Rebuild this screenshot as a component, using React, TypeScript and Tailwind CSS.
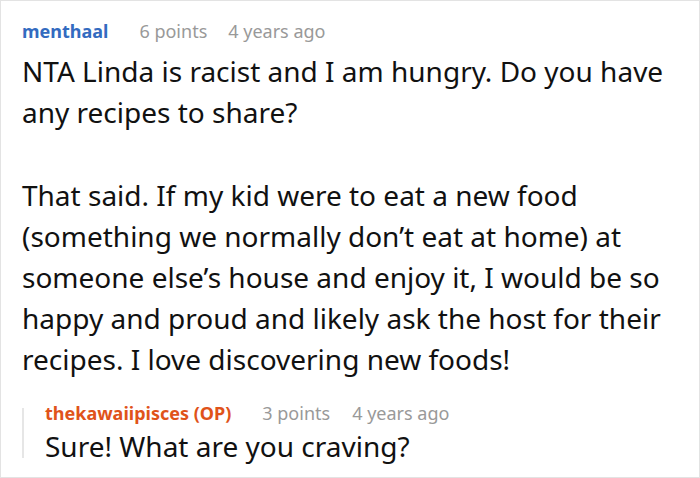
export default function App() {
  return (
    <div className="w-[700px] h-[478px] bg-white border border-[#e3e3e3] overflow-hidden" style={{ fontFamily: '"Noto Sans", "Open Sans", sans-serif' }}>
      <div className="pl-[21px] pr-3 pt-[16px]">
        <div className="flex items-baseline text-[18px] leading-[28px]">
          <span className="font-bold text-[#336bc0]">menthaal</span>
          <span className="ml-[31px] text-[#999999]">6 points</span>
          <span className="ml-[21px] text-[#999999]">4 years ago</span>
        </div>
        <div className="text-[28px] leading-[41px] text-[#111111] mt-[6px]">
          <p>NTA Linda is racist and I am hungry. Do you have any recipes to share?</p>
          <p className="mt-[42px]">That said. If my kid were to eat a new food (something we normally don’t eat at home) at someone else’s house and enjoy it, I would be so happy and proud and likely ask the host for their recipes. I love discovering new foods!</p>
        </div>
        <div className="mt-[19px] flex">
          <div className="w-[2px] h-[50px] mt-[9px] bg-[#e6e6e6] shrink-0" />
          <div className="pl-[21px]">
            <div className="flex items-baseline text-[18px] leading-[28px]">
              <span className="font-bold text-[#e0531a]">thekawaiipisces (OP)</span>
              <span className="ml-[31px] text-[#999999]">3 points</span>
              <span className="ml-[22px] text-[#999999]">4 years ago</span>
            </div>
            <div className="text-[28px] leading-[39px] text-[#111111]">Sure! What are you craving?</div>
          </div>
        </div>
      </div>
    </div>
  );
}
